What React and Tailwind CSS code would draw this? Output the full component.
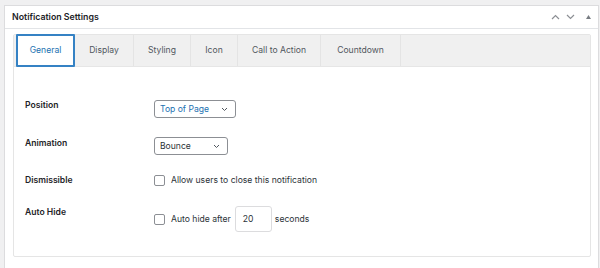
import React from "react";

const Chevron = ({ up }) => (
  <svg width="9" height="6" viewBox="0 0 9 6" fill="none">
    <path d={up ? "M1 5L4.5 1.5L8 5" : "M1 1L4.5 4.5L8 1"} stroke="#8c8f94" strokeWidth="1.2" />
  </svg>
);

const SmallChevron = () => (
  <svg width="7" height="5" viewBox="0 0 7 5" fill="none">
    <path d="M1 1L3.5 3.5L6 1" stroke="#50575e" strokeWidth="1" />
  </svg>
);

const Select = ({ value, width, blue }) => (
  <div
    className={`flex items-center justify-between h-[18px] border border-[#8c8f94] rounded-[3px] bg-white pl-[5px] pr-[7px] ${width} ${
      blue ? "text-[#2271b1]" : "text-[#2c3338]"
    }`}
  >
    <span>{value}</span>
    <SmallChevron />
  </div>
);

const Checkbox = () => (
  <div className="w-[11px] h-[11px] border border-[#8c8f94] rounded-[2px] bg-white shrink-0" />
);

export default function App() {
  const tabs = ["Display", "Styling", "Icon", "Call to Action", "Countdown"];
  const tabW = ["w-[59px]", "w-[57px]", "w-[47px]", "w-[83px]", "w-[80px]"];
  return (
    <div
      className="w-[600px] h-[268px] bg-[#f0f0f1] pt-[5px] pl-[4px] pr-[1px] overflow-hidden text-[8.6px]"
      style={{ fontFamily: "Inter, 'Liberation Sans', sans-serif" }}
    >
      <div className="bg-white border border-[#dcdcde] h-[280px]">
        <div className="h-[23px] border-b border-[#e2e4e7] flex items-center justify-between pl-[7px] pr-[6px]">
          <span className="text-[8.8px] font-semibold text-[#1d2327]">Notification Settings</span>
          <div className="flex items-center gap-[6px]">
            <Chevron up />
            <Chevron />
            <svg width="7" height="6" viewBox="0 0 7 6" className="ml-[4px]">
              <path d="M3.5 1L6 5H1Z" fill="#787c82" />
            </svg>
          </div>
        </div>
        <div className="pt-[5px] pl-[8px] pr-[7px]">
          <div className="border border-[#e5e5e5] rounded-[2px] h-[223px]">
            <div className="bg-[#f0f0f0] h-[32px] flex items-stretch pl-[2px] border-b border-[#e6e6e6]">
              <div className="w-[59px] h-[33px] bg-white border-2 border-[#3582c4] rounded-[1px] flex items-center justify-center text-[#2271b1] -mt-[1px]">
                General
              </div>
              {tabs.map((t, i) => (
                <div
                  key={t}
                  className={`${tabW[i]} flex items-center justify-center text-[#50575e] border-r border-[#e4e4e4]`}
                >
                  {t}
                </div>
              ))}
            </div>
            <div className="pl-[11px] pt-[30px] text-[#1d2327]">
              <div className="flex items-start h-[38px]">
                <div className="w-[129px] h-[16px] leading-[16px] font-semibold">Position</div>
                <div className="mt-[3px]">
                  <Select value="Top of Page" width="w-[82px]" blue />
                </div>
              </div>
              <div className="flex items-start h-[37px]">
                <div className="w-[129px] h-[16px] leading-[16px] font-semibold">Animation</div>
                <div className="mt-[2px]">
                  <Select value="Bounce" width="w-[74px]" />
                </div>
              </div>
              <div className="flex items-start h-[32px]">
                <div className="w-[129px] h-[16px] leading-[16px] font-semibold">Dismissible</div>
                <div className="flex items-center gap-[6px] h-[16px]">
                  <Checkbox />
                  <span className="text-[#2c3338]">Allow users to close this notification</span>
                </div>
              </div>
              <div className="flex items-start">
                <div className="w-[129px] h-[16px] leading-[16px] font-semibold">Auto Hide</div>
                <div className="flex items-center mt-[2px] text-[#2c3338]">
                  <Checkbox />
                  <span className="ml-[6px]">Auto hide after</span>
                  <div className="ml-[4px] w-[37px] h-[26px] border border-[#dcdcde] rounded-[3px] flex items-center pl-[7px]">
                    20
                  </div>
                  <span className="ml-[3px]">seconds</span>
                </div>
              </div>
            </div>
          </div>
        </div>
      </div>
    </div>
  );
}
